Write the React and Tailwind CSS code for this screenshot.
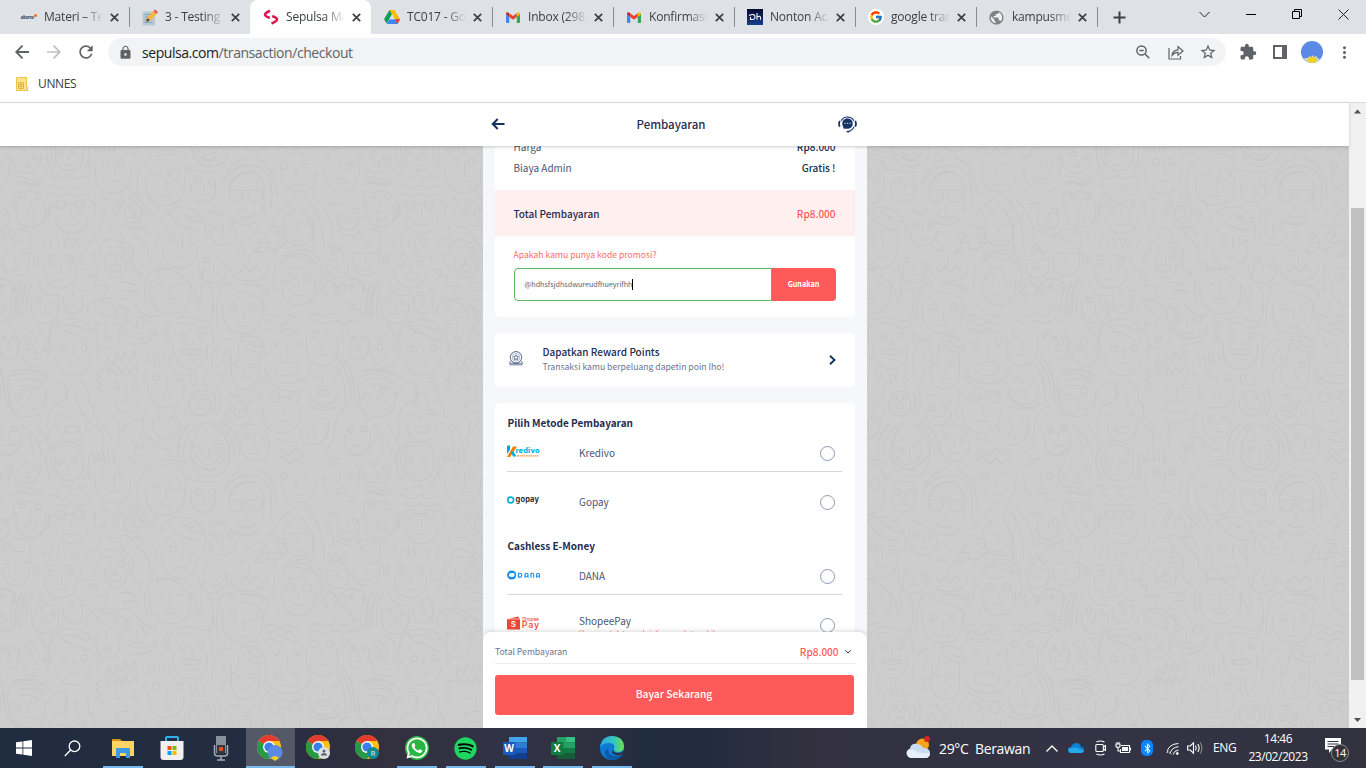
import React from "react";
import { FcGoogle } from "react-icons/fc";
import { FaWhatsapp, FaSpotify, FaBluetoothB } from "react-icons/fa";
import { MdStarOutline, MdExtension, MdLock, MdRefresh, MdMoreVert, MdPublic } from "react-icons/md";

/* ---------- wallpaper ---------- */
const FACES = [
  { u: [35, 121, 45, 100], e: [[71, 40, 8], [106, 53, 7]], n: [86, 62, 80], m: [72, 92, 80, 3] },
  { u: [166, 250, 14, 92], e: [[180, 36, 8], [222, 36, 8]], n: [204, 45, 60], m: [192, 215, 76, 0] },
  { u: [286, 392, 85, 160], e: [[318, 66, 10], [364, 65, 10]], n: [344, 66, 108], m: [330, 360, 124, 0] },
  { u: [438, 553, 108, 196], e: [[525, 103, 16]], n: [499, 115, 145], m: [482, 514, 165, 3] },
  { u: [573, 646, 130, 187], e: [[594, 124, 10], [637, 126, 10]], n: [613, 132, 152], m: [604, 626, 160, 4] },
  { u: [845, 947, 97, 157], e: [[852, 77, 10]], n: [888, 84, 112], m: [876, 915, 130, 7] },
  { e: [[1048, 79, 9]], n: [1021, 67, 88], o: [1026, 122, 19, 9] },
  { u: [48, 137, 185, 262], e: [[67, 165, 9], [113, 171, 9]], n: [93, 178, 196], o: [94, 228, 16, 15] },
  { u: [166, 264, 230, 281], e: [[181, 194, 14], [238, 194, 14]], n: [214, 208, 230], m: [190, 240, 247, 8] },
  { u: [374, 425, 205, 250], e: [[390, 203, 7]], n: [404, 212, 228], m: [392, 422, 230, 3] },
  { u: [487, 592, 320, 384], e: [[519, 297, 10], [580, 300, 12]], n: [548, 290, 325], m: [525, 563, 346, 8] },
  { u: [628, 710, 270, 316], e: [[647, 254, 8], [692, 254, 8]], n: [669, 250, 280], m: [660, 686, 294, 2] },
  { u: [852, 940, 245, 318], n: [894, 250, 280], m: [875, 908, 298, 7] },
  { u: [1012, 1076, 215, 270], e: [[1064, 214, 8]], n: [1046, 216, 236], m: [1026, 1058, 242, 5] },
  { u: [10, 88, 350, 407], n: [47, 345, 366], m: [32, 64, 385, 6] },
  { u: [134, 230, 380, 444], e: [[152, 368, 9], [212, 367, 8]], n: [184, 370, 398], m: [170, 202, 417, 3] },
  { u: [316, 378, 355, 413], e: [[364, 344, 8]], n: [346, 350, 370], o: [346, 385, 18, 11] },
  { u: [450, 572, 430, 522], n: [508, 433, 461], o: [508, 483, 16, 9] },
  { u: [596, 680, 375, 430], e: [[620, 360, 8], [671, 376, 8]], n: [640, 375, 397], m: [627, 662, 400, 6] },
  { u: [690, 803, 385, 424], n: [745, 345, 370] },
  { u: [846, 946, 420, 496], e: [[869, 413, 13], [922, 414, 13]], n: [896, 428, 445], m: [880, 914, 461, 5] },
  { u: [978, 1046, 360, 414], n: [1012, 363, 384], m: [1000, 1024, 382, 5] },
  { u: [95, 175, 485, 551], e: [[116, 480, 8], [158, 490, 7]], n: [137, 490, 512], m: [122, 156, 515, 7] },
  { u: [190, 248, 470, 520], e: [[214, 463, 7]], n: [225, 470, 488], m: [210, 228, 493, 4] },
  { u: [288, 360, 550, 624], e: [[324, 595, 8]], n: [320, 552, 572] },
  { u: [370, 472, 555, 595], e: [[383, 536, 9], [440, 537, 12]], n: [410, 542, 565], m: [390, 432, 575, 7] },
  { u: [520, 622, 610, 687], e: [[550, 590, 9], [604, 588, 9]], n: [576, 597, 622], m: [567, 586, 657, 2], o: [573, 636, 30, 8] },
  { u: [667, 787, 490, 580], e: [[700, 501, 10], [760, 501, 11]], n: [731, 512, 540], m: [712, 750, 553, 8] },
  { u: [919, 1013, 590, 678], e: [[945, 583, 11], [990, 583, 11]], n: [966, 600, 622], m: [952, 982, 644, 0] },
  { u: [165, 272, 650, 706], e: [[191, 626, 9], [253, 624, 9]], n: [221, 625, 645], m: [202, 238, 664, 7] },
  { u: [66, 145, 632, 680], e: [[90, 620, 9], [134, 628, 6]], n: [110, 630, 645], m: [100, 116, 656, 2] },
  { u: [694, 778, 645, 748], e: [[756, 676, 8]], n: [736, 680, 702], m: [722, 752, 710, 8] },
  { u: [795, 930, 685, 730], n: [863, 618, 648], o: [861, 686, 37, 21] },
  { u: [445, 552, 730, 804], e: [[468, 710, 10], [536, 710, 10]], n: [501, 710, 748], m: [488, 514, 768, 4] },
  { u: [568, 632, 780, 828], e: [[583, 772, 8], [617, 772, 8]], n: [600, 780, 795], m: [590, 612, 800, 6] },
  { u: [676, 755, 812, 855], e: [[698, 804, 9], [736, 804, 7]], n: [718, 810, 822], m: [704, 734, 826, 6] },
  { u: [787, 901, 810, 879], e: [[824, 772, 16], [885, 773, 16]], n: [849, 792, 825], m: [825, 870, 843, 0] },
  { u: [926, 1016, 745, 794], n: [968, 715, 735], o: [970, 759, 17, 8] },
  { u: [28, 136, 750, 832], e: [[52, 771, 10], [101, 754, 10]], n: [86, 768, 785], m: [75, 125, 800, 8] },
  { u: [172, 259, 850, 905], n: [210, 822, 842], o: [217, 869, 23, 10] },
  { u: [457, 540, 835, 896], e: [[482, 833, 8], [522, 832, 7]], n: [505, 843, 860], m: [494, 518, 875, 0] },
  { n: [379, 740, 773], o: [377, 800, 32, 16] },
  { u: [575, 688, 905, 1010], e: [[604, 927, 8], [653, 923, 12]], n: [628, 925, 962], m: [610, 650, 985, 7] },
  { u: [722, 806, 900, 964], e: [[742, 890, 8], [788, 899, 8]], n: [764, 895, 920], m: [750, 780, 938, 3] },
  { u: [898, 980, 860, 915], e: [[938, 884, 11]], n: [936, 846, 866] },
  { u: [1035, 1112, 880, 947], e: [[1050, 871, 8], [1095, 866, 8]], n: [1076, 876, 892], m: [1064, 1096, 912, 6] },
  { u: [0, 55, 600, 658], e: [[10, 594, 6], [42, 592, 7]], n: [26, 602, 620], m: [14, 38, 630, 4] },
];

const STROKES = [
  "M447 98l20 13l20-16M686 152H790M688 152v14a21 19 0 0 0 42 0v-14M744 152v14a21 19 0 0 0 44 0v-14M738 190V212M712 222Q738 245 768 222M690 235Q740 275 780 235",
  "M668 135C690 65 790 55 812 120Q820 180 811 202M686 150C700 80 775 80 792 135V218M690 128Q720 96 760 95M765 55Q825 70 832 170M740 52Q690 70 676 112",
  "M415 170C400 90 430 65 460 45M470 38Q520 20 560 40M470 52Q510 30 550 54M540 60Q560 75 556 95M560 85Q600 100 650 95",
  "M570 20Q625 100 683 15M583 12Q625 80 665 12M604 50Q625 65 650 50",
  "M825 38l22-20 22 24 20-18 16 20 28-22M897 68l28 6M968 60q10-20 20-10q0-20 14-20q10-10 20-2M1068 45q20 15 5 35q15 15-5 35M972 75q-4 45 20 62M1040 152q16 5 25-8",
  "M138 20Q138 70 157 95M152 20Q154 60 166 76M265 20Q272 60 250 92M278 18l8 18M292 18l6 18M308 18l4 18M325 18l2 18M345 18v18M275 60q-14 6-6 30M388 20q8 20 20 22",
  "M140 106q16-4 22 6t25 0t25 0t25 0t28 4M150 138q14-8 24 4t24 0t24 0t24 0t24 2M150 165q14-8 24 0t24 0t24 0t24 0t24 4M45 112q20-6 35 4t45 2M40 135q30-10 45-2t42-4M47 124q20-4 36 4t38-6",
  "M40 200v-30q4-16 20-18M78 154l40 4M148 192q10 40-20 50M195 192H224M160 200q-22-10-14 30M268 180l20 14M285 190q4 30-4 45M300 170l30 14M308 235l8-26M332 222l32-46M344 230l26-48M386 166l64 68M400 160l66 74",
  "M480 248C490 190 590 180 612 250Q620 270 615 290M505 220Q540 270 600 272M540 210Q570 250 610 246M480 290q-18 6-8 28M500 270l14-12M560 225q14 14 20 4M445 175q30 18 30 40",
  "M625 232q2-20 20-18q10-2 10 10q20-2 26-16M628 245v10M725 278l27 20M708 330l25 6l-8-20M782 320l-22 16h34M710 385l10 12l15-20l16 20l18-20l12 18",
  "M803 252l40 14l-12 16l30-2l-30 30l32-4l-26 18M765 272l34 14l-20 24l32-4l-8 22l30-2l-14 28",
  "M820 240Q850 190 890 172M852 240Q870 212 896 200M915 168Q970 220 972 330M905 200Q945 250 940 330M940 172Q1000 220 1002 296M865 252h24M908 252h20M985 195Q1010 180 1025 200",
  "M985 312l12 16 12-18 12 18 16-12M988 330l14 12 14-16 14 18 16-14M985 360l18 4M1022 360l20-4M1008 270q34 20 52 16",
  "M10 300q0-24 30-30M28 275q0 30 40 30M48 268q60-10 38 68q20 10 16 40M10 340h30M56 340h30M137 292l-8 28M155 292l-4 28M175 292l2 28M190 292l8 28M205 292l16 28M220 292l16 30M138 348l28-4M192 346l35 4M118 345q-14 10 0 30M238 352q12 6 4 24",
  "M258 330q0-30 28-34q18-8 10-38M300 382q-28-14-18-40q20 4 20-26q20-30 44-12q30 0 26 34q30 10 10 44M318 322h18M355 322h16M325 345q8-4 10 4M320 262q40-8 50 40q40 20 26 60q0 30 30 44M360 255q40 0 50 36q40 20 36 60q36 20 24 48",
  "M395 262q40-10 44 26M245 390h30l-8 18l24-4l-5 32l40 4l-12 26M230 440q10 20 22 10M240 470l14-6M115 425q10 50 64 40M358 428q30-4 50 10M370 454q20-8 50 6",
  "M440 490C410 380 500 340 580 445Q596 470 590 490M470 400Q500 376 530 390M472 430q12 8 20 0M530 432q12 6 20 0M600 430q10 30-4 70M628 440q20 30 8 70M613 385q-10 20-2 36M415 390l6 20",
  "M650 550C645 480 660 420 690 430Q700 460 730 456Q790 470 796 500M720 432Q800 435 808 470M736 430Q780 432 808 448M640 490l-2 34M816 505q20 0 26-20",
  "M845 370Q900 300 965 390Q970 430 950 450M862 342Q940 300 966 380M826 370Q820 400 822 455M845 345Q900 350 950 372M862 382Q890 390 915 378M960 460l20-30M975 415l50 32M990 425q30 25 38 45",
  "M1000 470q40-80 80-45M1035 435v20M1037 480q10 20 30 24M1098 430q-20 50-14 100M1112 430q-20 50-18 100M1126 430q-22 50-16 100",
  "M0 420q40-8 48 30M0 440h10M0 490l20 4M4 510h28M66 425q-20 45-14 105M84 425q-22 50-18 106M98 428q-22 40-18 100M5 545q10-12 16-8l-2 10l16-6",
  "M264 520q-10-40 50-45q46 0 66 50M282 490q30 50 72 44M300 480q50 10 52 50M288 552h16M336 550h18M358 478q30-10 60 30q24 30 54 18M350 500q24 0 40 16M415 530q10 0 20 10M385 612q60 8 84-28",
  "M500 600q-14-30 6-56M518 545q-24 30-10 60M530 538q24-14 56-2q40 16 50-6M530 552q30-10 60 8q30 16 44-20M636 575q10 20 0 36M795 530q14-14 28-2t25 0t25 0t26-4M800 552q14-14 28-2t25 0t25 0t26-4M796 574q14-14 28-2t25 0t25 0t26-4",
  "M930 530q16-16 30-6t30 0t30 0t34-4M930 552q16-16 30-6t30 0t30 0t34-4M820 602l8 18l12-18M886 602l8 18l12-18M1022 580q10 8 4 22M1030 595q10-10 16-30",
  "M150 600q-10-60 60-64q50 0 70 40M175 545q-10 20 40 34M180 560q40-10 60 4t34 0M190 575q40 5 60 22t24-8M155 640q-20-40 0-70M290 615q10 10 0 34M66 580q20 10 28 24M84 570q20 8 30 40M112 560q20 10 30 40M60 605l-10 40",
  "M318 700l4-46l20 20l8-32l14 22l10-30l14 26l16-28l6 36M325 710l4-28l20 22l6-24l12 24l10-30l10 26l20-24l6 26M310 690l-22 10l14 12l-16 8l18 12l-14 10l20 16M344 724l18 22h-26M394 742l14-22M396 742h24M445 645l6 32M460 645l6 32M475 645l6 30M490 645l4 28M508 645v26M435 698q-12 10 0 26",
  "M638 690q-10-90 60-96M668 725q-10-30 40-60q10-20 8-50M668 665q2-28 24-40M725 590q70-14 70 58M722 600q10 30 56 40M744 598q20 30 40 20M704 670q10 20 20 4M790 712q60 60 118 35M940 705q8 14 20 4M990 706q14 10 22 0",
  "M1010 680q30 36 25 110M1018 664q40 50 34 112M1024 645q44 60 40 132M925 800q60 20 98-8M934 775q20 30 60 28",
  "M0 680Q14 720 12 770Q30 815 60 842M28 710q60-24 102 16M30 695q80-26 124 28M46 722q50-20 86 14M26 718q-10 40 6 64M60 738q30-10 62 12M40 700q50-20 85 8",
  "M140 760q20-40 50-34q20 40-4 60q-40 8-44 70M200 740q10 40-10 55M230 726q40 0 36 60q20 10 14 40q30 20 60 80M228 750q-4 50 26 70q10 30 40 40q24 24 14 60M170 820q10 10 22 2M230 820q14 10 24 2M150 870l-8 28M340 830l16 12M360 848q-8 40-6 70",
  "M365 880q10-40 60-40M390 890q20 60 42 18M416 870q0 30 36 24q30 44 60 30M440 810q-20 40-5 70M275 935l18 32M290 930l14 34M306 928l10 36M324 926l4 38M342 928v36M410 915q-10 30 4 38M425 930l8-12M450 912l20 14",
  "M575 700q-10 20 6 40M590 695q-10 20 6 40M620 700q-20 18 0 40M650 745q24 40 0 80M640 760q14 26 0 56M555 798v24M572 760q10-10 50-6M684 760q10 10 26 4q20 40 44 18M790 758q-20 0-12 26M840 773H868M765 812l12 22",
  "M534 950Q530 870 580 845M548 950Q550 880 608 845M575 930Q590 850 620 850Q680 870 688 930M640 850Q700 870 704 950M655 842Q720 870 718 944M600 902l14-6M640 898l24 4M725 860Q780 840 806 890M830 895q30 14 50 10M825 945l20-18 22 20 20-24 20 22 26-16M985 912q20-2 18-50q10-60 50-64M980 890q10-20 6-50M915 832l18 3M965 835h20M975 940l12-20 10 10",
  "M140 975q-14-50 44-68q60-10 66 38M156 940q20-30 50-24q30 5 30 26M66 855q50 30 60 90M80 880q20 30 18 60M0 940q30 14 56-20M10 915q10 8 22-2M110 850q20 20 40 80",
];
const EYES2 = [[38, 866, 8], [2, 872, 6], [14, 214, 8], [4, 441, 6], [40, 448, 6], [977, 464, 6], [1010, 458, 6], [1055, 441, 6], [1092, 448, 6], [1063, 595, 6]];

const chin = ([a, b, t, y]) => {
  const w = b - a;
  const k = Math.min(w * 0.5, y - t);
  return `M${a} ${t}V${y - k}C${a + w * 0.02} ${y - k * 0.4} ${a + w * 0.22} ${y} ${a + w / 2} ${y}S${b} ${y - k * 0.4} ${b} ${y - k}V${t}`;
};

function Wallpaper() {
  const shifts = [-1050, 0, 1050].flatMap((x) => [-930, 0, 930].map((y) => [x, y]));
  return (
    <svg className="block h-full w-full" aria-hidden="true">
      <defs>
        <g id="tile" fill="none" stroke="#c6c6c6" strokeWidth="3.2" strokeLinecap="round" strokeLinejoin="round">
          {FACES.map((f, i) => (
            <g key={i}>
              {f.u && <path d={chin(f.u)} />}
              {f.e && f.e.map(([x, y, r], j) => <circle key={j} cx={x} cy={y} r={r} />)}
              {f.n && <path d={`M${f.n[0]} ${f.n[1]}V${f.n[2]}`} />}
              {f.m && <path d={`M${f.m[0]} ${f.m[2]}Q${(f.m[0] + f.m[1]) / 2} ${f.m[2] + 2 * f.m[3]} ${f.m[1]} ${f.m[2]}`} />}
              {f.o && <ellipse cx={f.o[0]} cy={f.o[1]} rx={f.o[2]} ry={f.o[3]} />}
            </g>
          ))}
          {STROKES.map((d, i) => <path key={i} d={d} />)}
          {EYES2.map(([x, y, r], i) => <circle key={i} cx={x} cy={y} r={r} />)}
        </g>
        <pattern id="crowd" width="1050" height="930" patternUnits="userSpaceOnUse" patternTransform="translate(0 -6) scale(0.33333)">
          {shifts.map(([x, y]) => <use key={`${x},${y}`} href="#tile" x={x} y={y} />)}
        </pattern>
      </defs>
      <rect width="100%" height="100%" fill="#cdcdcd" />
      <rect width="100%" height="100%" fill="url(#crowd)" />
    </svg>
  );
}

/* ---------- browser icons ---------- */
const Gmail = () => (
  <svg width="14" height="11" viewBox="0 0 28 22">
    <path d="M0 4v16q0 2 2 2h4.500V9z" fill="#4285f4" /><path d="M28 4v16q0 2-2 2h-4.500V9z" fill="#34a853" />
    <path d="M0 4l6.500 6V2.500Q0-2 0 4z" fill="#c5221f" /><path d="M28 4l-6.500 6V2.500Q28-2 28 4z" fill="#fbbc04" />
    <path d="M6.500 2.500L14 8.200l7.500-5.700V10L14 15.700 6.500 10z" fill="#ea4335" />
  </svg>
);
const Drive = () => (
  <svg width="16" height="14" viewBox="0 0 32 28">
    <path d="M11 0h10L10.500 18 5.500 27 0 18.500z" fill="#0f9d58" /><path d="M11 0h10l11 18.500H21.500z" fill="#fbbc04" />
    <path d="M10.500 18.500H32L27 28H5.500z" fill="#4285f4" /><path d="M21.500 18.500H32L27 28z" fill="#ea4335" /><path d="M16 9l5.500 9.500h-11z" fill="#dee1e6" />
  </svg>
);
const Sepulsa = () => (
  <svg width="16" height="16" viewBox="0 0 32 32" fill="none" stroke="#e0144c" strokeWidth="5">
    <path d="M14 3.500Q4 8 4 11.500Q4 14 13.500 18" /><path d="M17 29Q28 24.500 28 20.500Q28 18 18.500 14" />
  </svg>
);
const Note = () => (
  <svg width="17" height="17" viewBox="0 0 34 34">
    <rect x="3" y="5" width="25" height="28" rx="1" fill="#b8c9d6" /><path d="M7 11h14M7 16h10M7 21h7M7 27h16" stroke="#8ba3b5" strokeWidth="2" />
    <path d="M10 26l3-9L25 4l6 6-12 13z" fill="#f5b733" /><path d="M25 4l3-3 6 5-3 4z" fill="#e8505b" /><path d="M10 26l3-8 5 5z" fill="#5b4636" />
  </svg>
);
const Alterra = () => (
  <span className="flex w-4 items-center text-[5px] font-bold leading-none tracking-[-0.6px] text-[#3b5275]">alterra<span className="mb-1 h-[3px] w-[3px] shrink-0 rounded-full bg-orange-500" /></span>
);
const Hotstar = () => (
  <svg width="16" height="16" viewBox="0 0 16 16">
    <defs><linearGradient id="hs" x2="0" y2="1"><stop stopColor="#050a2c" /><stop offset="1" stopColor="#153f94" /></linearGradient></defs>
    <rect width="16" height="16" fill="url(#hs)" />
    <path d="M2 6.500q6-2.500 6 1.500 0 3-4.500 2.500V8M10 4v6.700M10 8q3.500-2 3.500 1v1.700" fill="none" stroke="#fff" strokeWidth="1.100" />
  </svg>
);

const TABS = [
  { t: "Materi – Testing", i: <Alterra /> },
  { t: "3 - Testing Plan", i: <Note /> },
  { t: "Sepulsa Mobile", i: <Sepulsa />, active: true },
  { t: "TC017 - Google", i: <Drive /> },
  { t: "Inbox (298) - m", i: <Gmail /> },
  { t: "Konfirmasi Pe", i: <Gmail /> },
  { t: "Nonton Acara", i: <Hotstar /> },
  { t: "google translate", i: <span className="flex h-4 w-4 items-center justify-center rounded-full bg-white"><FcGoogle size={14} /></span> },
  { t: "kampusmerdeka", i: <span className="flex h-[14px] w-[14px] items-center justify-center rounded-full bg-[#f1f1f1]"><MdPublic size={17} className="shrink-0 text-[#7f8285]" /></span> },
];

const Cross = () => (
  <svg width="9" height="9" viewBox="0 0 9 9" stroke="#3c4043" strokeWidth="1.700"><path d="M.8.8l7.400 7.400M8.200.8L.8 8.200" /></svg>
);

function Tab({ t, i, active, line }) {
  return (
    <div className={`relative flex h-full w-[121px] shrink-0 items-center ${active ? "rounded-t-lg bg-white" : ""}`}>
      <span className="ml-[12px] flex w-[17px] justify-center">{i}</span>
      <span className="ml-[7px] w-[59px] overflow-hidden whitespace-nowrap text-[12px] tracking-[-0.2px] text-[#3c4043] [mask-image:linear-gradient(to_right,black_65%,transparent)]">{t}</span>
      <span className="ml-[7px]"><Cross /></span>
      {line && <span className="absolute right-[-1px] top-[7px] h-5 w-px bg-[#8a8d91]" />}
    </div>
  );
}

function Browser() {
  return (
    <header className="font-['Open_Sans','Noto_Sans',sans-serif]">
      <div className="flex h-[34px] bg-[#dee1e6] pl-2">
        {TABS.map((tab, i) => <Tab key={i} {...tab} line={i !== 1 && i !== 2} />)}
        <div className="flex w-[43px] items-center justify-center pl-[1px]">
          <svg width="13" height="13" viewBox="0 0 13 13" stroke="#3c4043" strokeWidth="2"><path d="M6.500 .5v12M.5 6.500h12" /></svg>
        </div>
        <div className="ml-auto flex items-start gap-[36px] pr-[17px] pt-[9px]">
          <svg width="11" height="11" viewBox="0 0 11 11" fill="none" stroke="#222"><path d="M.5 3l5 5 5-5" /></svg>
          <svg width="10" height="11" viewBox="0 0 10 11" stroke="#000"><path d="M0 5.500h10" /></svg>
          <svg width="10" height="10" viewBox="0 0 10 10" fill="none" stroke="#000"><path d="M.5 2.500h7v7h-7zM2.500 2V.5h7v7H8" /></svg>
          <svg width="11" height="11" viewBox="0 0 11 11" stroke="#222"><path d="M.5.5l10 10M10.500.5l-10 10" /></svg>
        </div>
      </div>
      <div className="flex h-9 items-center bg-white text-[#5f6368]">
        <svg className="ml-[15px]" width="14" height="14" viewBox="0 0 14 14" fill="none" stroke="#5f6368" strokeWidth="1.800"><path d="M14 7H1.500M7.500.7L1.200 7l6.300 6.300" /></svg>
        <svg className="ml-[18px]" width="14" height="14" viewBox="0 0 14 14" fill="none" stroke="#bcbec1" strokeWidth="1.700"><path d="M0 7h12.500M6.500.7L12.800 7l-6.300 6.300" /></svg>
        <MdRefresh className="ml-[15px]" size={20} color="#5f6368" />
        <div className="ml-[12px] flex h-7 w-[1118px] items-center rounded-full bg-[#f1f3f4] pl-[10px] pr-[9px]">
          <MdLock size={15} color="#5f6368" />
          <span className="ml-[9px] text-[14px] tracking-[-0.44px] text-[#5f6368]"><span className="text-[#202124]">sepulsa.com</span>/transaction/checkout</span>
          <svg className="ml-auto" width="14" height="14" viewBox="0 0 14 14" fill="none" stroke="#5f6368" strokeWidth="1.500"><circle cx="5.500" cy="5.500" r="4.600" /><path d="M9 9l4.300 4.300M3.300 5.500h4.400" /></svg>
          <svg className="ml-[18px]" width="16" height="15" viewBox="0 0 16 15" fill="none" stroke="#5f6368" strokeWidth="1.200"><path d="M1 3v11h11.500v-3M4 10.500q.5-5.500 6-5.700V1.500L15 6l-5 4.300V7.300q-3.500-.2-6 3.200z" /></svg>
          <MdStarOutline className="ml-[15px]" size={18} />
        </div>
        <MdExtension className="ml-[13px]" size={18} />
        <svg className="ml-[16px]" width="14" height="14" viewBox="0 0 14 14"><path d="M0 0h14v14H0zM2 2v10h7V2z" fill="#5f6368" fillRule="evenodd" /></svg>
        <Daisy className="ml-[14px]" size={22} />
        <MdMoreVert className="ml-[12px]" size={19} />
      </div>
      <div className="flex h-[33px] items-center border-b border-[#dadce0] bg-white pb-[5px] pl-[16px]">
        <svg width="12" height="14" viewBox="0 0 12 14"><path d="M.5.5h10v9.500h1v3.500H.5z" fill="#fde68a" stroke="#e8c24a" /><path d="M2.500 5.500h5v6h-5zM5 5.500v6M2.500 7.500h5M2.500 9.500h5" fill="none" stroke="#d9ab28" strokeWidth=".8" /></svg>
        <span className="ml-[10px] text-[12px] tracking-[-0.35px] text-[#3c4043]">UNNES</span>
      </div>
    </header>
  );
}

function Daisy({ size, className }) {
  return (
    <svg className={className} width={size} height={size} viewBox="0 0 22 22">
      <clipPath id={`d${size}`}><circle cx="11" cy="11" r="11" /></clipPath>
      <g clipPath={`url(#d${size})`}>
        <rect width="22" height="22" fill="#5b8ae6" />
        <path d="M3 17l4 0 1-2 2 1 2-2 1 2 3-1v2l3 1-3 5H5z" fill="#cfd6c8" /><ellipse cx="11" cy="19" rx="4.500" ry="3" fill="#f2d21b" />
      </g>
    </svg>
  );
}

/* ---------- checkout page ---------- */
const Radio = () => <span className="h-[15px] w-[15px] shrink-0 rounded-full border border-[#8d99b3]" />;

const Kredivo = () => (
  <svg width="34" height="13" viewBox="0 0 34 13">
    <path d="M0 1l3-1v5L0 9z" fill="#00a9df" /><path d="M0 12L6 1.500h4L3 12z" fill="#ff7a00" /><path d="M4 7l2-1 3.500 5.500H6z" fill="#00a9df" />
    <text x="8.500" y="8" fontFamily="Inter" fontWeight="800" fontSize="7.300" fill="#00b4e6" textLength="24">redivo</text>
    <path d="M10 10.800h22" stroke="#ff9a44" strokeWidth="1.300" strokeDasharray="2 .6 1.300 .5" />
  </svg>
);
const Gopay = () => (
  <svg width="34" height="11" viewBox="0 0 34 11">
    <circle cx="3.700" cy="5" r="2.900" fill="#fff" stroke="#00aed6" strokeWidth="1.600" />
    <text x="8.500" y="7" fontFamily="Inter" fontWeight="700" fontSize="7.500" fill="#2d2d2d" textLength="23.500">gopay</text>
  </svg>
);
const Dana = () => (
  <svg width="34" height="10" viewBox="0 0 34 10">
    <circle cx="4.700" cy="5" r="4.600" fill="#118eea" /><path d="M2 4q2.500-1.800 5.500-.4v2.600Q5 7.800 2 6.300z" fill="#fff" />
    <path d="M11.500 3.200h1.700q1.400 0 1.400 1.200v1.500q0 1.200-1.400 1.200h-1.700zM18 7.700V4.600q0-1.400 1.500-1.400T21 4.600v3.100M18 6.200h3M24 7.700V3.200h1.200q1.500 0 1.500 1.500v3M29.600 7.700V4.600q0-1.400 1.400-1.400t1.400 1.400v3.100M29.600 6.200h2.800" fill="none" stroke="#118eea" strokeWidth="1.100" />
  </svg>
);
const Shopee = () => (
  <svg width="34" height="15" viewBox="0 0 34 15">
    <path d="M1 3l10-2.500 2 2.500v10.500H0V3z" fill="#f04438" /><path d="M1 3h12" stroke="#fff" strokeWidth=".6" />
    <text x="3.800" y="11" fontFamily="Inter" fontWeight="600" fontSize="8" fill="#fff">S</text>
    <text x="15" y="4.500" fontFamily="Inter" fontSize="5" fill="#f04438" textLength="17">Shopee</text>
    <text x="14.800" y="12.300" fontFamily="Inter" fontWeight="500" fontSize="9" fill="#f04438" textLength="17.500">Pay</text>
  </svg>
);

function Method({ logo, name, note, className }) {
  return (
    <div className={`flex items-center ${className}`}>
      <span className="flex w-[72.500px] items-center pb-[3px]">{logo}</span>
      <span className="flex-1 text-[10px] leading-4 text-[#4c5670]">{name}{note && <span className="block text-[7px] leading-[9px] text-[#ff7373]">{note}</span>}</span>
      <Radio />
    </div>
  );
}

function Checkout() {
  return (
    <main className="relative flex h-[625px] w-full font-['Noto_Sans_CJK_SC',sans-serif] text-[#1f2d50]">
      <div className="flex min-w-0 flex-1 flex-col">
        <div className="relative z-10 flex h-[43px] shrink-0 justify-center bg-white shadow-[0_1px_3px_rgba(0,0,0,0.2)]">
          <div className="flex w-[366px] items-center justify-between pr-[1px]">
            <svg className="-ml-px mb-[1px]" width="14" height="12" viewBox="0 0 14 12" fill="none" stroke="#143365" strokeWidth="2"><path d="M13.500 6H2M6.700 1L1.700 6l5 5" /></svg>
            <span className="text-[11.500px] font-medium">Pembayaran</span>
            <svg className="mb-[1px]" width="19" height="18" viewBox="0 0 18 17"><path d="M3 5.500A6.800 6.800 0 0 1 15 5.500M15.200 11Q13.500 15 9.500 15.700" fill="none" stroke="#143365" strokeWidth="1.100" /><path d="M1.700 5.500Q.3 8.200 1.700 11M16.300 5.500q1.400 2.700 0 5.500" fill="none" stroke="#143365" strokeWidth="1.700" /><circle cx="9" cy="8" r="5" fill="#143365" /><path d="M4.800 12.800l.6-3 3 3z" fill="#143365" /><path d="M6 8h1.300M8.400 8h1.300M10.800 8h1.300" stroke="#aab9d3" strokeWidth="1.200" /><ellipse cx="9.500" cy="15.700" rx="1.500" ry=".9" fill="#143365" /></svg>
          </div>
        </div>
        <div className="relative min-h-0 flex-1 overflow-hidden">
          <div className="absolute inset-0"><Wallpaper /></div>
          <div className="relative mx-auto flex h-full w-[384px] flex-col gap-4 overflow-hidden bg-[#f5f7fa] px-3">
            <section className="h-[171px] shrink-0 rounded-b-[4px] bg-white text-[10px]">
              <div className="flex h-[44px] flex-col justify-between px-[19px] pb-[14px]">
                <div className="-mt-[7px] flex justify-between leading-4"><span className="text-[#4c5670]">Harga</span><b className="font-medium">Rp8.000</b></div>
                <div className="flex justify-between leading-4"><span className="text-[#4c5670]">Biaya Admin</span><b className="font-medium">Gratis !</b></div>
              </div>
              <div className="flex h-[46px] items-center justify-between bg-[#ffefee] px-[19px] font-medium"><span>Total Pembayaran</span><span className="text-[#ff5a5a]">Rp8.000</span></div>
              <div className="px-[19px] pt-[10px]">
                <p className="text-[8.640px] leading-4 text-[#ff6b6b]">Apakah kamu punya kode promosi?</p>
                <div className="mt-[6px] flex h-[33px]">
                  <div className="flex w-[258px] items-center rounded-l-[4px] border border-[#5cb85c] pb-px pl-[10px] text-[7.200px] text-[#5c6370]">@hdhsfsjdhsdwureudfhueyrifhh<span className="h-[11px] w-px bg-black" /></div>
                  <button className="w-[64px] rounded-r-[4px] bg-[#ff5a5a] text-[7.200px] font-bold text-white">Gunakan</button>
                </div>
              </div>
            </section>
            <section className="flex h-[54px] shrink-0 items-center rounded-[4px] bg-white pl-[14px] pr-[19px]">
              <svg className="mb-[3px]" width="14" height="15" viewBox="0 0 14 15" fill="none" stroke="#44537c" strokeWidth=".9"><circle cx="7" cy="6.300" r="5.700" /><circle cx="7" cy="6.300" r="3.800" strokeWidth=".4" /><path d="M7 3.900l.8 1.600 1.700.3-1.300 1.200.3 1.700L7 7.900l-1.500.8.300-1.700-1.300-1.200 1.700-.3zM1.500 10q-1.300 1.500-.5 3.800h12q.8-2.300-.5-3.800M1.500 12.200h2.500q3 1.300 6 0h2.500" strokeWidth=".8" /></svg>
              <div className="-mt-[3px] ml-5 flex-1"><p className="text-[10px] font-medium leading-4">Dapatkan Reward Points</p><p className="text-[8.640px] leading-[13px] text-[#6b7590]">Transaksi kamu berpeluang dapetin poin lho!</p></div>
              <svg width="7" height="10" viewBox="0 0 7 10" fill="none" stroke="#143365" strokeWidth="1.900"><path d="M1 .7L5.500 5 1 9.300" /></svg>
            </section>
            <section className="h-[400px] shrink-0 rounded-[4px] bg-white px-3 pt-3">
              <h2 className="pl-[1px] text-[10px] font-bold leading-4">Pilih Metode Pembayaran</h2>
              <Method logo={<Kredivo />} name="Kredivo" className="h-[41px] w-[335px] border-b border-[#d3d6db] pr-[7px] pt-[4px]" />
              <Method logo={<Gopay />} name="Gopay" className="h-[59px] w-[335px] pr-[7px] pt-px" />
              <h2 className="mt-[7px] pl-[1px] text-[10px] font-bold leading-4">Cashless E-Money</h2>
              <Method logo={<Dana />} name="DANA" className="h-[41px] w-[335px] border-b border-[#d3d6db] pr-[7px] pt-[4px]" />
              <Method logo={<Shopee />} name="ShopeePay" note="Hanya untuk transaksi di perangkat mobile" className="h-[60px] w-[335px] pr-[7px]" />
            </section>
            <div className="absolute inset-x-0 bottom-0 flex h-24 flex-col rounded-t-lg bg-white px-3 shadow-[0_-1px_4px_rgba(0,0,0,0.15)]">
              <div className="flex h-8 items-center border-b border-[#ececef] pl-[0.500px] pr-1 pt-2 text-[8.640px] text-[#6b7590]">
                Total Pembayaran<span className="ml-auto text-[10px] font-medium text-[#ff5a5a]">Rp8.000</span>
                <svg className="ml-[6px]" width="6" height="4" viewBox="0 0 6 4" fill="none" stroke="#143365"><path d="M.4.5L3 3 5.600.5" /></svg>
              </div>
              <button className="mt-[11px] h-10 w-[359px] rounded-[3px] bg-[#ff5a5a] pb-[2px] text-[10.300px] font-medium text-white">Bayar Sekarang</button>
            </div>
          </div>
        </div>
      </div>
      <div className="flex w-[17px] flex-col items-center justify-between bg-[#f1f1f1] py-[6px]">
        <svg width="7" height="5" viewBox="0 0 7 4"><path d="M0 4L3.500 0 7 4z" fill="#505050" /></svg>
        <span className="mt-[56px] h-[472px] w-[13px] bg-[#c1c1c1]" />
        <svg width="7" height="4" viewBox="0 0 7 4"><path d="M0 0l3.500 4L7 0z" fill="#505050" /></svg>
      </div>
    </main>
  );
}

/* ---------- taskbar ---------- */
const Chrome = ({ children }) => (
  <svg width="26" height="26" viewBox="0 0 26 26">
    <circle cx="12" cy="12" r="12" fill="#fbc116" />
    <path d="M12 12L1.600 6A12 12 0 0 1 22.400 6H12z" fill="#e33b2e" /><path d="M12 12L1.600 6A12 12 0 0 0 12 24l5.200-9z" fill="#269a46" />
    <circle cx="12" cy="12" r="6" fill="#fff" /><circle cx="12" cy="12" r="4.600" fill="#3b7ded" />
    {children}
  </svg>
);
const Win = () => <svg width="16" height="16" viewBox="0 0 16 16" fill="#fff"><path d="M0 2.300L6.500 1.400v6.200H0zM7.300 1.300L16 0v7.600H7.300zM0 8.400h6.500v6.200L0 13.700zM7.300 8.400H16V16l-8.700-1.300z" /></svg>;
const Glass = () => <svg width="17" height="17" viewBox="0 0 17 17" fill="none" stroke="#fff" strokeWidth="1.300"><circle cx="10.500" cy="6.300" r="5.300" /><path d="M6.700 10L.8 16" /></svg>;
const Explorer = () => (
  <svg width="22" height="20" viewBox="0 0 22 20"><path d="M0 1h8l2 2H0z" fill="#d8930c" /><path d="M0 3h22v15H0z" fill="#ffd465" /><path d="M4 11q0-1 1-1h12q1 0 1 1v9h-4v-5H8v5H4z" fill="#3d9be5" /></svg>
);
const Store = () => (
  <svg width="24" height="24" viewBox="0 0 24 24"><path d="M6 6V2q0-1 1-1h10q1 0 1 1v4" fill="none" stroke="#2fb2e8" strokeWidth="2" /><path d="M.5 5h23v16q0 3-3 3h-17q-3 0-3-3z" fill="#f1f1f1" /><path d="M7.500 10h4v4h-4z" fill="#f25022" /><path d="M12.500 10h4v4h-4z" fill="#7fba00" /><path d="M7.500 15h4v4h-4z" fill="#00a4ef" /><path d="M12.500 15h4v4h-4z" fill="#ffb900" /></svg>
);
const Mic = () => (
  <svg width="16" height="25" viewBox="0 0 16 25"><rect x="3" width="10" height="17" fill="#87919c" /><rect x="4" y="9" width="8" height="9" fill="#33383f" /><path d="M1.500 9v8q0 3 3 3h7q3 0 3-3V9" fill="none" stroke="#a5abb3" strokeWidth="1.500" /><path d="M8 20v4M4 24h8" stroke="#a5abb3" strokeWidth="1.500" /><circle cx="8" cy="13" r="2.300" fill="#e8501e" /></svg>
);
const Office = ({ c, l }) => (
  <svg width="24" height="22" viewBox="0 0 24 22"><path d="M6 0h18v5.500H6z" fill={c[0]} /><path d="M6 5.500h18V11H6z" fill={c[1]} /><path d="M6 11h18v5.500H6z" fill={c[2]} /><path d="M6 16.500h18V22H6z" fill={c[3]} />{l === "X" && <path d="M6 0h9v11H6z" fill="#21a366" />}<rect y="5" width="12.500" height="13" rx="1" fill={c[4]} /><text x="6.200" y="15" textAnchor="middle" fontFamily="Open Sans" fontWeight="700" fontSize="10" fill="#fff">{l}</text></svg>
);
const Edge = () => (
  <svg width="24" height="24" viewBox="0 0 24 24">
    <defs><linearGradient id="ea"><stop stopColor="#2ba9ea" /><stop offset=".6" stopColor="#35c7b8" /><stop offset="1" stopColor="#6fe04a" /></linearGradient></defs>
    <circle cx="12" cy="12" r="12" fill="#0d7bd6" /><path d="M0 11Q2 0 12 0q11 0 12 10 0 6-6 6-5 0-4-3 2-6-5-6Q3 7 0 11z" fill="url(#ea)" />
    <path d="M8 12q0 8 7 8 4 0 8-2-3 6-11 6-8-2-7-9z" fill="#0c59a4" /><path d="M13.500 13q-.5 4 5 4 3 0 5-2.500l1 2-2 2q-8 2-10.500-2z" fill="#2e3144" />
  </svg>
);
const APPS = [
  { i: <Explorer />, on: true }, { i: <Store /> }, { i: <Mic /> },
  { i: <Chrome><circle cx="18" cy="17.500" r="7.500" fill="#5b8ae6" /><path d="M14 23q4-4 8 0l-4 3z" fill="#f2d21b" /></Chrome>, active: true },
  { i: <Chrome><circle cx="18" cy="18" r="6" fill="#dcdfe3" /><circle cx="18" cy="16" r="1.500" fill="#5f6368" /><path d="M15 20.500q0-2.500 3-2.500t3 2.500z" fill="#5f6368" /></Chrome> },
  { i: <Chrome><circle cx="18" cy="18" r="6" fill="#0e8a96" /><text x="18" y="20.800" textAnchor="middle" fontFamily="Roboto" fontSize="7.500" fill="#d5f0f2">R</text></Chrome> },
  { i: <span className="flex h-[24px] w-[24px] items-center justify-center rounded-full bg-[#29b742] text-white"><FaWhatsapp size={24} /></span>, on: true },
  { i: <span className="flex h-[21px] w-[21px] items-center justify-center rounded-full bg-black"><FaSpotify size={23} className="shrink-0 text-[#1ed760]" /></span>, on: true },
  { i: <Office l="W" c={["#41a5ee", "#2b7cd3", "#185abd", "#103f91", "#185abd"]} />, on: true },
  { i: <Office l="X" c={["#33c481", "#21a366", "#107c41", "#185c37", "#107c41"]} />, on: true },
  { i: <Edge />, on: true },
];

function Taskbar() {
  return (
    <footer className="flex h-10 bg-[linear-gradient(90deg,#202c3f_0px,#232d41_240px,#33303f_390px,#303245_500px,#30303f_590px,#1f2b3e_650px,#222c40_710px,#32303f_800px,#333345_1100px,#32323f_1366px)] font-['Open_Sans','Noto_Sans',sans-serif] text-white">
      <div className="flex w-12 items-center justify-center"><Win /></div>
      <div className="flex w-[51px] items-center justify-center pr-[3px]"><Glass /></div>
      {APPS.map((a, i) => (
        <div key={i} className={`flex w-[48.900px] flex-col items-center ${a.active ? "bg-[#545968]" : ""}`}>
          <span className="flex h-[38px] items-center pt-[2px]">{a.i}</span>
          {(a.on || a.active) && <span className={`h-[2px] bg-[#76b9ed] ${a.active ? "w-full" : "w-10"}`} />}
        </div>
      ))}
      <div className="ml-auto flex items-center pr-[2px]">
        <svg width="26" height="24" viewBox="0 0 26 24"><circle cx="16.500" cy="9" r="6.500" fill="#f7a31c" /><path d="M5 22a5 5 0 0 1-1-9.500Q5 7 11 8q4 0 6 4 7 0 7 5 0 5-5 5z" fill="#c9dcf5" /><path d="M5 22a5 5 0 0 1-4-7q5-3 9 0t14 2q0 5-5 5z" fill="#e6effb" /><circle cx="21" cy="3" r="3" fill="#d3281e" /></svg>
        <span className="ml-[7px] w-[91px] whitespace-nowrap text-[14px] tracking-[-0.35px]">29°C&nbsp; Berawan</span>
        <svg className="ml-[16px]" width="12" height="7" viewBox="0 0 12 7" fill="none" stroke="#fff" strokeWidth="1.300"><path d="M.5 6.500L6 1l5.500 5.500" /></svg>
        <svg className="ml-[10px]" width="16" height="10" viewBox="0 0 16 10"><path d="M3 10a3 3 0 0 1 0-6Q5 0 8.500 0t4.500 4q3 0 3 3t-3 3z" fill="#0a84d8" /><path d="M3 10q-3-1-2.500-4Q7 2 16 8q-1 2-3 2z" fill="#28a8ea" /></svg>
        <svg className="ml-[11px]" width="11" height="16" viewBox="0 0 11 16" fill="none" stroke="#fff" strokeWidth="1.100"><rect x=".8" y="4.500" width="7.500" height="7" rx="1" /><path d="M8.500 7l2-1.500v5L8.500 9M1.500 2q4-2 8 0M1.500 14q4 2 8 0" /></svg>
        <svg className="ml-[9px]" width="16" height="12" viewBox="0 0 16 12" fill="none" stroke="#fff" strokeWidth="1.100"><path d="M6 3.500h8.500v7h-9V7M15.500 5.500v3M1 2h4v2.500q-2 2-4 0zM2 0v2M4 0v2M3 5.500V9h2.500" /><path d="M7 5h6v4H7z" fill="#fff" stroke="none" /></svg>
        <span className="ml-[10px] flex h-4 w-3 items-center justify-center rounded-[5px] bg-[#0a84ff]"><FaBluetoothB size={11} /></span>
        <svg className="ml-[13px]" width="13" height="13" viewBox="0 0 13 13" fill="none" stroke="#fff"><path d="M1 11Q2 2 12.500 1.500M4 12q1-6.500 8.500-7.300M7 12.500q1-4 5.500-4.500" /><circle cx="11.300" cy="11.500" r="1" fill="#fff" /><path d="M1 8.500L5 12.500" stroke="#999" /></svg>
        <svg className="ml-[8px]" width="16" height="14" viewBox="0 0 16 14" fill="none" stroke="#fff" strokeWidth="1.100"><path d="M.6 5h2.600L6.500 1.800v10.400L3.200 9H.6zM8.500 4.500q1.500 2.500 0 5M10.800 3q2.600 4 0 8" /><path d="M13.200 1.500q3.500 5.500 0 11" stroke="#888" /></svg>
        <span className="ml-[10px] w-[23px] text-[12px] tracking-[-0.3px]">ENG</span>
        <div className="ml-[12px] w-[60px] whitespace-nowrap text-center text-[12px] leading-[18px] tracking-[-0.45px]"><div>14:46</div><div>23/02/2023</div></div>
        <div className="relative ml-[17px] h-[26px] w-[39px]">
          <svg className="mt-[3px]" width="16" height="15" viewBox="0 0 16 15"><path d="M0 0h16v11.500H7L4 15v-3.500H0z" fill="#fff" /><path d="M2.500 3.500h11M2.500 6h11M2.500 8.500h7" stroke="#333345" /></svg>
          <span className="absolute left-[6px] top-[9px] flex h-[18px] w-[18px] items-center justify-center rounded-full border border-[#8d8f98] bg-[#333] text-[11px] tracking-[-0.5px]">14</span>
        </div>
      </div>
    </footer>
  );
}

export default function App() {
  return (
    <div className="flex h-[768px] w-[1366px] flex-col overflow-hidden bg-white">
      <Browser />
      <Checkout />
      <Taskbar />
    </div>
  );
}
